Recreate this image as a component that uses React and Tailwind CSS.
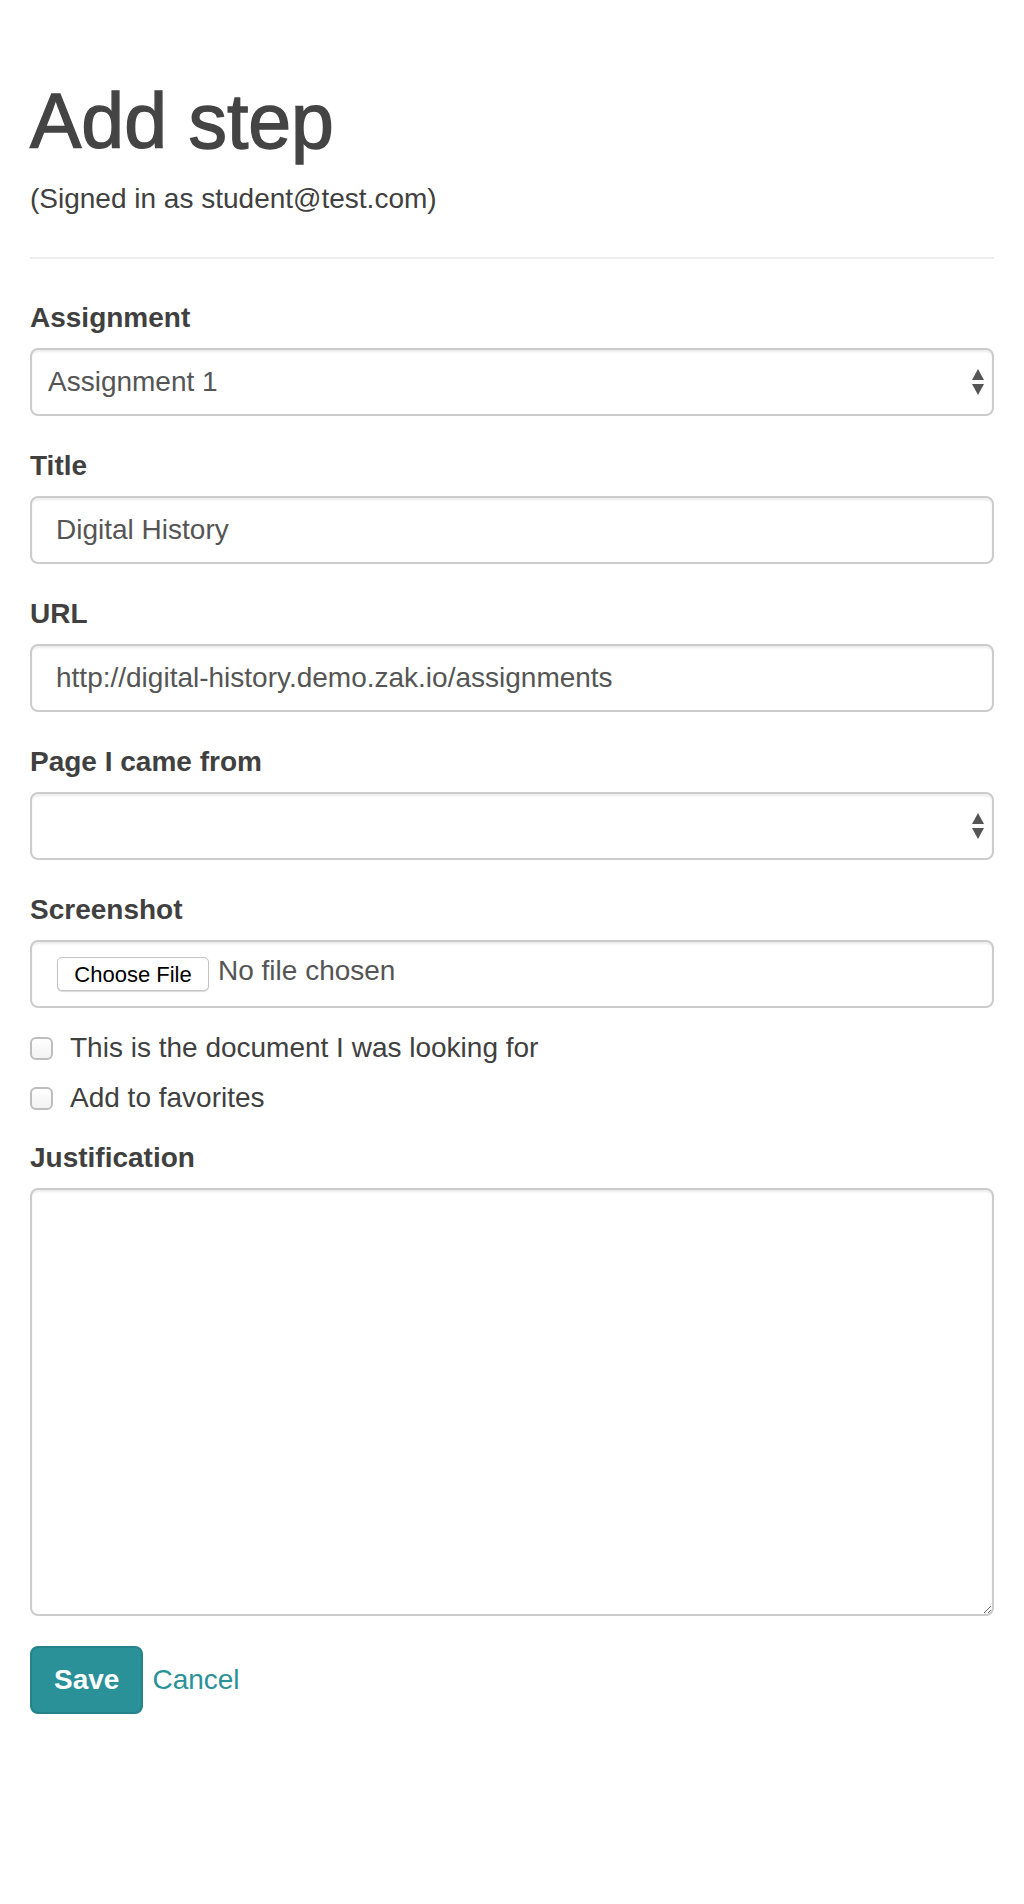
import React from "react";

function Label({ children }) {
  return (
    <label className="block text-[28px] leading-[40px] font-bold text-[#404040] mb-[10px]">
      {children}
    </label>
  );
}

function SelectArrows() {
  return (
    <svg
      className="pointer-events-none absolute right-[10px] top-[21px]"
      width="12"
      height="26"
      viewBox="0 0 12 26"
    >
      <polygon points="6,0 12,11 0,11" fill="#555" />
      <polygon points="0,15 12,15 6,26" fill="#555" />
    </svg>
  );
}

function SelectBox({ value, options }) {
  return (
    <div className="relative h-[68px] w-full">
      <select
        defaultValue={value}
        className="h-[68px] w-full appearance-none rounded-[8px] border-2 border-[#ccc] bg-white pl-[16px] pr-[40px] text-[28px] text-[#555] shadow-[inset_0_2px_2px_rgba(0,0,0,0.075)] outline-none font-['Liberation_Sans',Arial,sans-serif]"
      >
        {options.map((o) => (
          <option key={o} value={o}>
            {o}
          </option>
        ))}
      </select>
      <SelectArrows />
    </div>
  );
}

function TextInput({ value }) {
  return (
    <input
      type="text"
      defaultValue={value}
      className="block h-[68px] w-full rounded-[8px] border-2 border-[#ccc] bg-white px-[24px] text-[28px] text-[#555] shadow-[inset_0_2px_2px_rgba(0,0,0,0.075)] outline-none font-['Liberation_Sans',Arial,sans-serif]"
    />
  );
}

function Checkbox({ children }) {
  return (
    <label className="flex h-[40px] items-center text-[28px] text-[#404040]">
      <span className="block h-[23px] w-[23px] rounded-[6px] border-2 border-[#bdbdbd] bg-gradient-to-b from-white to-[#f2f2f2]" />
      <span className="ml-[17px] leading-[40px]">{children}</span>
    </label>
  );
}

export default function App() {
  return (
    <div className="min-h-[1904px] bg-white px-[30px] pt-[79px] font-['Liberation_Sans',Arial,sans-serif] text-[#404040]">
      <h1 className="text-[77px] leading-[84px] font-normal text-[#444] [-webkit-text-stroke:1.4px_#444]">
        Add step
      </h1>
      <p className="mt-[16px] text-[28px] leading-[40px]">(Signed in as student@test.com)</p>
      <div className="mt-[38px] mb-[39px] h-[2px] w-full bg-[#eee]" />

      <form className="block">
        <div className="mb-[30px]">
          <Label>Assignment</Label>
          <SelectBox value="Assignment 1" options={["Assignment 1", "Assignment 2"]} />
        </div>

        <div className="mb-[30px]">
          <Label>Title</Label>
          <TextInput value="Digital History" />
        </div>

        <div className="mb-[30px]">
          <Label>URL</Label>
          <TextInput value="http://digital-history.demo.zak.io/assignments" />
        </div>

        <div className="mb-[30px]">
          <Label>Page I came from</Label>
          <SelectBox value="" options={[""]} />
        </div>

        <div>
          <Label>Screenshot</Label>
          <div className="flex h-[68px] w-full items-start rounded-[8px] border-2 border-[#ccc] bg-white px-[25px] pt-[15px] shadow-[inset_0_2px_2px_rgba(0,0,0,0.075)]">
            <span className="flex h-[34px] w-[152px] items-center justify-center rounded-[5px] border border-[#c4c4c4] bg-white text-[22px] text-black shadow-[0_1px_1px_rgba(0,0,0,0.15)]">
              Choose File
            </span>
            <span className="ml-[9px] -mt-[4px] text-[28px] leading-[36px] text-[#555]">No file chosen</span>
          </div>
        </div>

        <div className="mt-[20px]">
          <Checkbox>This is the document I was looking for</Checkbox>
        </div>
        <div className="mt-[10px]">
          <Checkbox>Add to favorites</Checkbox>
        </div>

        <div className="mt-[20px]">
          <Label>Justification</Label>
          <textarea className="block h-[428px] w-full resize-y rounded-[8px] border-2 border-[#ccc] bg-white px-[24px] py-[12px] text-[28px] text-[#555] shadow-[inset_0_2px_2px_rgba(0,0,0,0.075)] outline-none" />
        </div>

        <div className="mt-[30px] flex items-center">
          <button
            type="button"
            className="h-[68px] rounded-[8px] border-2 border-[#25838b] bg-[#2a9199] px-[22px] text-[28px] font-bold text-white"
          >
            Save
          </button>
          <a href="#" className="ml-[9px] text-[28px] text-[#2a9199]">
            Cancel
          </a>
        </div>
      </form>
    </div>
  );
}
